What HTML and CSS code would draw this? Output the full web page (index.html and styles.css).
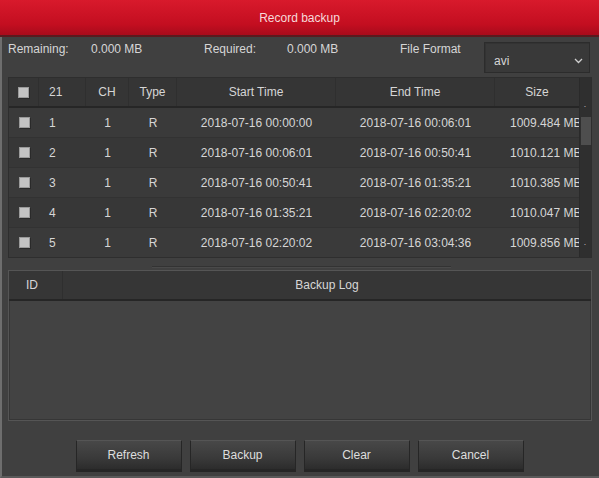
FILE: index.html
```html
<!DOCTYPE html>
<html lang="en">
<head>
    <meta charset="UTF-8">
    <meta name="viewport" content="width=device-width, initial-scale=1.0">
    <title>Record backup</title>
    <link rel="stylesheet" href="styles.css">
</head>
<body>
    <div class="dialog">
        <div class="title-bar">Record backup</div>

        <div class="info">
            <span class="info-label">Remaining:</span>
            <span class="info-value">0.000 MB</span>
            <span class="info-label">Required:</span>
            <span class="info-value">0.000 MB</span>
            <span class="info-label format-label">File Format</span>
            <div class="select">
                <span>avi</span>
                <svg width="9" height="6" viewBox="0 0 9 6"><path d="M1 1l3.5 3.5L8 1" fill="none" stroke="#cfcfcf" stroke-width="1.3"/></svg>
            </div>
        </div>

        <div class="records">
            <div class="records-table">
                <div class="row head">
                    <div class="cell c-check"><span class="checkbox"></span></div>
                    <div class="cell c-num">21</div>
                    <div class="cell c-ch">CH</div>
                    <div class="cell c-type">Type</div>
                    <div class="cell c-time">Start Time</div>
                    <div class="cell c-time">End Time</div>
                    <div class="cell c-size head-size">Size</div>
                </div>
                <div id="rows"></div>
            </div>
            <div class="vscroll">
                <span class="arrow">&#729;</span>
                <div class="thumb"></div>
                <span class="arrow bottom">&#729;</span>
            </div>
        </div>
        <div class="hscroll"><div class="hthumb"></div></div>

        <div class="log">
            <div class="log-head">
                <div class="log-id">ID</div>
                <div class="log-title">Backup Log</div>
            </div>
            <div class="log-body"></div>
        </div>

        <div class="buttons">
            <button class="btn">Refresh</button>
            <button class="btn">Backup</button>
            <button class="btn">Clear</button>
            <button class="btn">Cancel</button>
        </div>
    </div>

    <script>
        const records = [
            { id: 1, ch: 1, type: 'R', start: '2018-07-16 00:00:00', end: '2018-07-16 00:06:01', size: '1009.484 MB' },
            { id: 2, ch: 1, type: 'R', start: '2018-07-16 00:06:01', end: '2018-07-16 00:50:41', size: '1010.121 MB' },
            { id: 3, ch: 1, type: 'R', start: '2018-07-16 00:50:41', end: '2018-07-16 01:35:21', size: '1010.385 MB' },
            { id: 4, ch: 1, type: 'R', start: '2018-07-16 01:35:21', end: '2018-07-16 02:20:02', size: '1010.047 MB' },
            { id: 5, ch: 1, type: 'R', start: '2018-07-16 02:20:02', end: '2018-07-16 03:04:36', size: '1009.856 MB' }
        ];

        const rows = document.getElementById('rows');
        records.forEach(rec => {
            const row = document.createElement('div');
            row.className = 'row';
            row.innerHTML = `
                <div class="cell c-check"><span class="checkbox"></span></div>
                <div class="cell c-num">${rec.id}</div>
                <div class="cell c-ch">${rec.ch}</div>
                <div class="cell c-type">${rec.type}</div>
                <div class="cell c-time">${rec.start}</div>
                <div class="cell c-time">${rec.end}</div>
                <div class="cell c-size">${rec.size}</div>
            `;
            rows.appendChild(row);
        });
    </script>
</body>
</html>
```

FILE: styles.css
```css
* {
    margin: 0;
    padding: 0;
    box-sizing: border-box;
}

body {
    font-family: "Liberation Sans", Arial, sans-serif;
    font-size: 12px;
    color: #d6d6d6;
    background: #404040;
}

.dialog {
    width: 599px;
    height: 478px;
    background: #404040;
    border-left: 2px solid #6e6e6e;
    border-bottom: 2px solid #5a5a5a;
    display: flex;
    flex-direction: column;
}

.title-bar {
    height: 37px;
    margin-left: -2px;
    background: linear-gradient(#d81a2c, #c30e20 70%, #a80b1b);
    border-bottom: 2px solid #5a1a1f;
    color: #f6dada;
    display: flex;
    align-items: center;
    justify-content: center;
    font-size: 12px;
}

.info {
    height: 40px;
    display: flex;
    align-items: flex-start;
    padding: 5px 0 0 6px;
}

.info-label,
.info-value {
    line-height: 14px;
}

.info-label {
    width: 83px;
}

.info-value {
    width: 113px;
}

.format-label {
    width: 84px;
}

.select {
    width: 106px;
    height: 31px;
    background: #393939;
    border: 1px solid #2c2c2c;
    box-shadow: inset 1px 1px 0 #333;
    display: flex;
    align-items: center;
    justify-content: space-between;
    padding: 6px 6px 0 9px;
}

.records {
    height: 181px;
    margin: 0 7px 0 6px;
    display: flex;
    background: #363636;
    border: 1px solid #2e2e2e;
}

.records-table {
    flex: 1;
    overflow: hidden;
}

.row {
    display: flex;
    height: 30px;
    align-items: center;
    background: #3a3a3a;
    border-bottom: 1px solid #323232;
}

.row:nth-child(even) {
    background: #373737;
}

.row.head {
    height: 30px;
    background: #353535;
    border-bottom: 2px solid #262626;
}

.cell {
    height: 100%;
    display: flex;
    align-items: center;
    justify-content: center;
    white-space: nowrap;
    overflow: hidden;
}

.head .cell {
    border-right: 1px solid #2f2f2f;
}

.c-check { width: 30px; }
.c-num { width: 47px; justify-content: flex-start; padding-left: 10px; }
.c-ch { width: 43px; }
.c-type { width: 48px; }
.c-time { width: 159px; }
.c-size { flex: 1; justify-content: flex-start; padding-left: 15px; }
.head .head-size { justify-content: center; padding-left: 0; border-right: none; }

.checkbox {
    width: 11px;
    height: 11px;
    background: #c4c4c4;
    border: 1px solid #9a9a9a;
    box-shadow: 1px 1px 0 #2a2a2a;
}

.vscroll {
    width: 12px;
    background: #2f2f2f;
    border-left: 1px solid #2a2a2a;
    display: flex;
    flex-direction: column;
    align-items: center;
    padding-top: 29px;
    position: relative;
}

.arrow {
    font-size: 10px;
    line-height: 8px;
    color: #bbb;
}

.thumb {
    width: 10px;
    height: 28px;
    background: #4e4e4e;
    margin-top: 2px;
}

.arrow.bottom {
    margin-top: auto;
    margin-bottom: 4px;
}

.hscroll {
    height: 12px;
    margin: 0 8px;
    padding-top: 8px;
}

.hthumb {
    margin: 0 140px 0 142px;
    height: 2px;
    background: #4a4a4a;
    border-top: 1px solid #333;
}

.log {
    height: 151px;
    margin: 0 7px 0 6px;
    border: 1px solid #555;
    box-shadow: inset 0 0 0 1px #363636;
    background: #434343;
    display: flex;
    flex-direction: column;
}

.log-head {
    height: 30px;
    display: flex;
    background: #363636;
    border-bottom: 2px solid #262626;
}

.log-id {
    width: 54px;
    padding-left: 17px;
    display: flex;
    align-items: center;
    border-right: 1px solid #2f2f2f;
}

.log-title {
    flex: 1;
    display: flex;
    align-items: center;
    justify-content: center;
}

.log-body {
    flex: 1;
}

.buttons {
    display: flex;
    justify-content: center;
    gap: 8px;
    padding-top: 19px;
    margin-left: -2px;
}

.btn {
    width: 106px;
    height: 30px;
    font-family: "Liberation Sans", Arial, sans-serif;
    font-size: 12px;
    color: #dedede;
    background: linear-gradient(#484848, #3a3a3a 60%, #2c2c2c);
    border: 1px solid #262626;
    border-top-color: #555;
    box-shadow: 0 2px 0 #262626;
    cursor: pointer;
}
```
